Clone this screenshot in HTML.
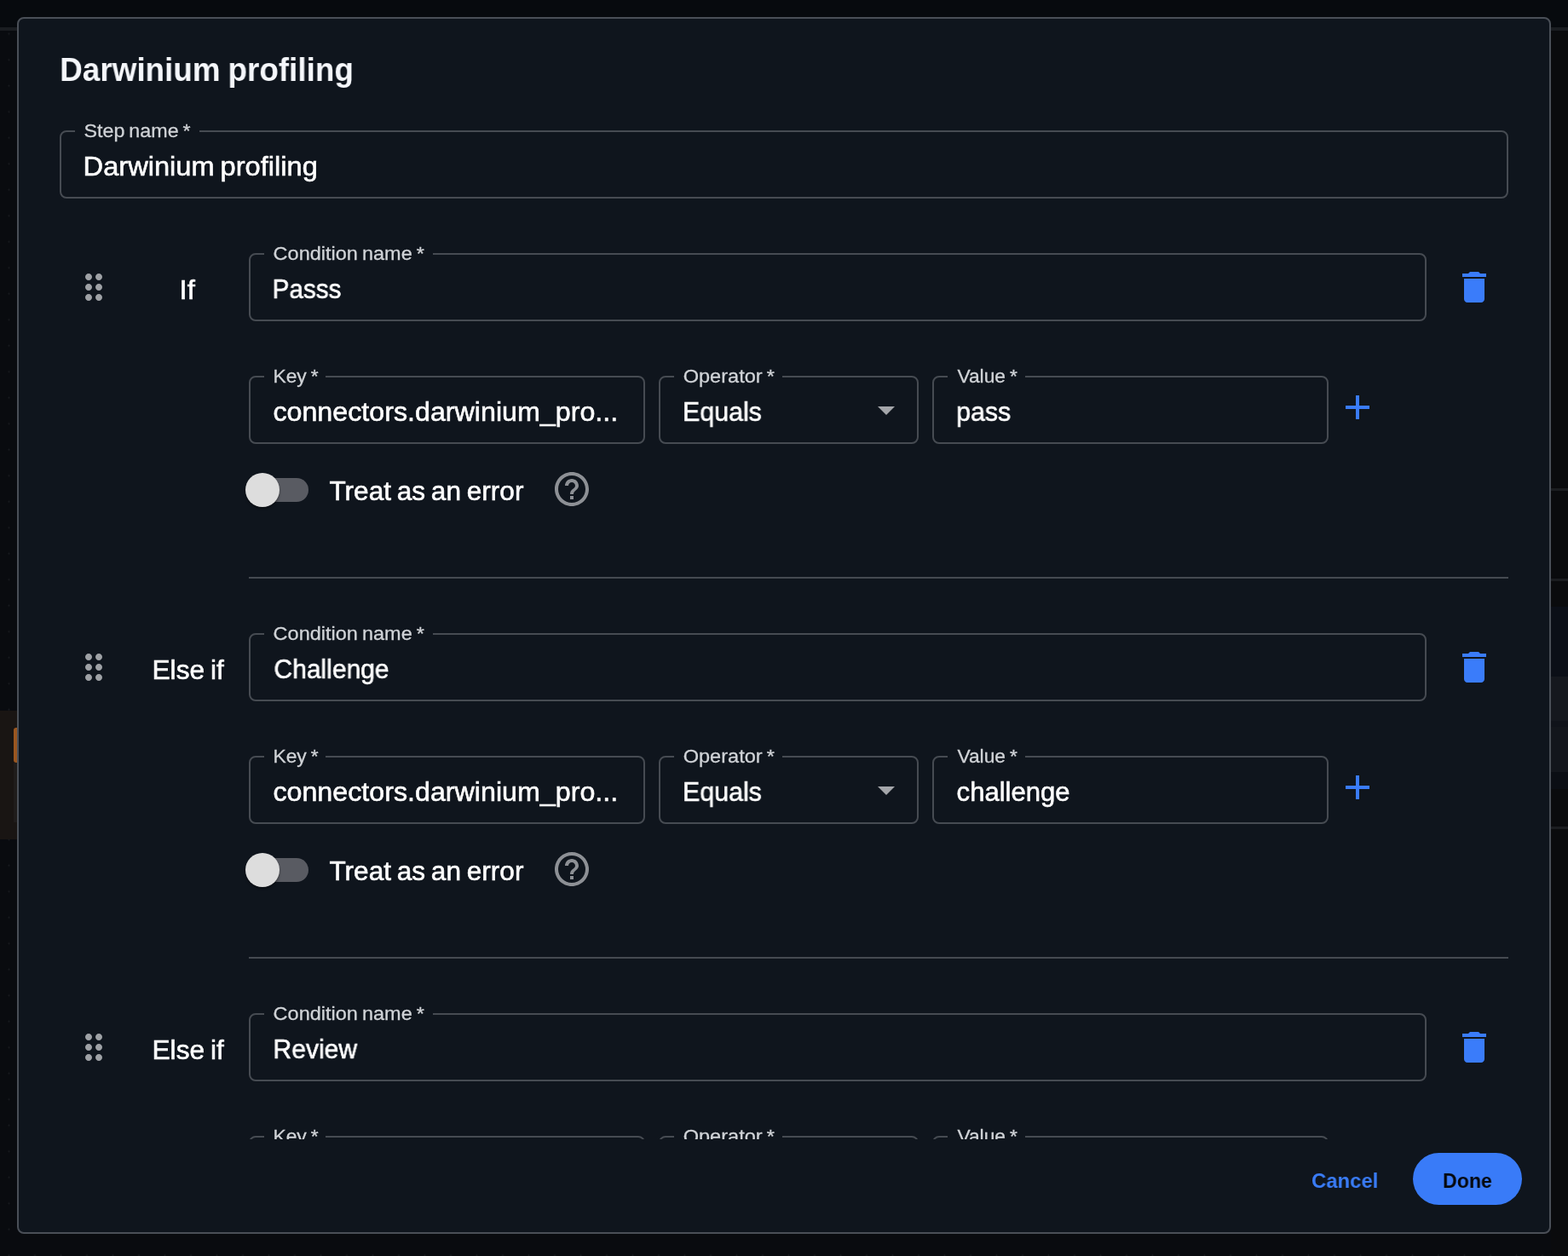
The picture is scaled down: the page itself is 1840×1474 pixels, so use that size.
<!DOCTYPE html>
<html lang="en">
<head>
<meta charset="utf-8">
<title>Darwinium profiling</title>
<style>
*{box-sizing:border-box;margin:0;padding:0}
html,body{width:1840px;height:1474px;overflow:hidden;background:#090b0f}
body{position:relative;font-family:"Liberation Sans",sans-serif;color:#fff;-webkit-font-smoothing:antialiased}
/* ---------- dimmed app behind the modal ---------- */
.app{position:absolute;left:0;top:0;width:1840px;height:1474px;background:#090b0f;overflow:hidden}
.app .dots{position:absolute;left:0;top:36px;width:1840px;height:1438px;
  background-image:radial-gradient(circle,#181b1f 0,#181b1f 0.7px,transparent 1.3px);
  background-size:30.5px 30.5px;background-position:-4.75px -11.55px}
.app .topbar{position:absolute;left:0;top:0;width:1840px;height:32px;background:#070a0e}
.app .topline{position:absolute;left:0;top:32px;width:1840px;height:4px;background:#1a1d21}
.app .side{position:absolute;left:1820px;top:36px;width:20px;height:1438px;background:#0a0b0d}
.app .side i{position:absolute;left:0;width:20px;display:block}
.app .node{position:absolute;left:0;top:834px;width:20px;height:151px;background:#191513}
.app .node b{position:absolute;left:16px;top:20px;width:4px;height:41px;background:#9a5620;border-radius:3px 0 0 3px}
.app .node u{position:absolute;left:16px;top:61px;width:4px;height:70px;background:#1f1c1b}
/* ---------- dialog ---------- */
.dialog{position:absolute;left:20px;top:20px;width:1800px;height:1428px;border:2px solid #4a4f57;border-radius:8px;background:#0f151d;overflow:hidden}
.page{position:absolute;left:-22px;top:-22px;width:1840px;height:1474px}
.scroll{position:absolute;left:0;top:0;width:1840px;height:1337px;overflow:hidden}
.t{display:inline-block;white-space:nowrap;transform-origin:0 50%;will-change:transform;word-spacing:-0.065em;-webkit-text-stroke:0.55px currentColor}
h2.title{position:absolute;left:70px;top:57.5px;font-size:38.5px;line-height:48px;font-weight:700;color:#f5f7fb;}
h2.title .t{-webkit-text-stroke:0;word-spacing:-1.5px}
.cond{position:absolute;left:0;width:1840px;height:446px}
.field{position:absolute;height:80px;border:2px solid #464b52;border-radius:8px}
.field label{position:absolute;left:16px;top:-14px;height:26px;padding:0 10px;background:#0f151d;font-size:22.6px;line-height:26px;color:#d0d3d7;white-space:nowrap}
.field label .t{-webkit-text-stroke:0.3px currentColor}
.field .val{position:absolute;left:26px;top:23px;font-size:31px;line-height:36px;color:#fff;white-space:nowrap}
.field svg.dd{position:absolute;right:12px;top:14px}
.kw{position:absolute;top:26px;left:221px;width:0;font-size:31px;line-height:36px;white-space:nowrap;display:flex;justify-content:center}
.kw .t{transform-origin:50% 50%}
.ico{position:absolute;width:48px;height:48px;display:block}
.sw-track{position:absolute;left:294px;top:264px;width:68px;height:28px;border-radius:14px;background:#595b62}
.sw-thumb{position:absolute;left:288px;top:258px;width:40px;height:40px;border-radius:50%;background:#dddddd;box-shadow:0 2px 3px rgba(0,0,0,.4)}
.sw-label{position:absolute;left:387px;top:261.5px;font-size:31px;line-height:36px;white-space:nowrap}
.hr{position:absolute;left:292px;top:380px;width:1478px;height:2px;background:#454a51}
.actions{position:absolute;left:0;top:1337px;width:1840px;height:111px}
.btn{position:absolute;top:16px;height:61px;width:128px;border:0;border-radius:31px;font-family:inherit;font-size:24.5px;font-weight:700;line-height:65px;text-align:center;background:transparent;color:#3a7cf6;padding:0}
.btn .t{transform-origin:50% 50%;-webkit-text-stroke:0}
.btn.primary{background:#397bf8;color:#06090e}
</style>
</head>
<body>
<div class="app" aria-hidden="true">
  <div class="topbar"></div>
  <div class="topline"></div>
  <div class="dots"></div>
  <div class="node"><b></b><u></u></div>
  <div class="side">
    <i style="top:537px;height:3px;background:#1b1d20"></i>
    <i style="top:643px;height:3px;background:#1b1d20"></i>
    <i style="top:676px;height:82px;background:#0b0f17"></i>
    <i style="top:758px;height:52px;background:#15181e"></i>
    <i style="top:810px;height:7px;background:#10131a"></i>
    <i style="top:817px;height:53px;background:#13161c"></i>
    <i style="top:870px;height:20px;background:#0b0e14"></i>
    <i style="top:934px;height:3px;background:#1b1d20"></i>
  </div>
</div>

<div class="dialog" role="dialog" aria-modal="true">
<div class="page">
  <div class="scroll">
    <h2 class="title"><span class="t" style="transform:translateX(0.20px) scaleX(0.9575)">Darwinium profiling</span></h2>
    <div class="field" style="left:70px;top:153px;width:1700px">
      <label style="width:146px"><span class="t" style="transform:translateX(0.40px) scaleX(1.0314)">Step name *</span></label>
      <div class="val"><span class="t" style="transform:translateX(-0.40px) scaleX(1.0523)">Darwinium profiling</span></div>
    </div>

    <section class="cond" style="top:297px">
      <svg class="ico" style="left:86px;top:16px" viewBox="0 0 24 24"><path fill="#9fa2a6" d="M11 18c0 1.1-.9 2-2 2s-2-.9-2-2 .9-2 2-2 2 .9 2 2zm-2-8c-1.1 0-2 .9-2 2s.9 2 2 2 2-.9 2-2-.9-2-2-2zm0-6c-1.1 0-2 .9-2 2s.9 2 2 2 2-.9 2-2-.9-2-2-2zm6 4c1.1 0 2-.9 2-2s-.9-2-2-2-2 .9-2 2 .9 2 2 2zm0 2c-1.1 0-2 .9-2 2s.9 2 2 2 2-.9 2-2-.9-2-2-2zm0 6c-1.1 0-2 .9-2 2s.9 2 2 2 2-.9 2-2-.9-2-2-2z"/></svg>
      <div class="kw"><span class="t" style="transform:translateX(-0.90px) scaleX(1.0632)">If</span></div>
      <div class="field" style="left:292px;top:0;width:1382px">
        <label style="width:198px"><span class="t" style="transform:translateX(0.60px) scaleX(1.0403)">Condition name *</span></label>
        <div class="val"><span class="t" style="transform:translateX(-0.40px) scaleX(0.9567)">Passs</span></div>
      </div>
      <svg class="ico" style="left:1706px;top:16px" viewBox="0 0 24 24"><path fill="#3a7cfa" d="M6 19c0 1.1.9 2 2 2h8c1.1 0 2-.9 2-2V7H6v12zM19 4h-3.5l-1-1h-5l-1 1H5v2h14V4z"/></svg>
      <div class="field" style="left:292px;top:144px;width:465px">
        <label style="width:72px"><span class="t" style="transform:translateX(0.40px) scaleX(1.0121)">Key *</span></label>
        <div class="val"><span class="t" style="transform:translateX(0.40px) scaleX(1.0396)">connectors.darwinium_pro...</span></div>
      </div>
      <div class="field" style="left:773px;top:144px;width:305px">
        <label style="width:127px"><span class="t" style="transform:translateX(0.70px) scaleX(1.0421)">Operator *</span></label>
        <div class="val"><span class="t" style="transform:translateX(0.00px) scaleX(0.9796)">Equals</span></div>
        <svg class="ico dd" viewBox="0 0 24 24"><path fill="#a4a6aa" d="M7 10l5 5 5-5z"/></svg>
      </div>
      <div class="field" style="left:1094px;top:144px;width:465px">
        <label style="width:91px"><span class="t" style="transform:translateX(1.40px) scaleX(1.0094)">Value *</span></label>
        <div class="val"><span class="t" style="transform:translateX(0.20px) scaleX(0.9764)">pass</span></div>
      </div>
      <svg class="ico" style="left:1569px;top:157px" viewBox="0 0 24 24"><path fill="#3a7cfa" d="M19 13h-6v6h-2v-6H5v-2h6V5h2v6h6v2z"/></svg>
      <div class="sw-track"></div>
      <div class="sw-thumb"></div>
      <div class="sw-label"><span class="t" style="transform:translateX(-0.60px) scaleX(1.0197)">Treat as an error</span></div>
      <svg class="ico" style="left:647px;top:253px" viewBox="0 0 24 24"><path fill="#8d9095" d="M11 18h2v-2h-2v2zm1-16C6.48 2 2 6.48 2 12s4.48 10 10 10 10-4.48 10-10S17.52 2 12 2zm0 18c-4.41 0-8-3.59-8-8s3.59-8 8-8 8 3.59 8 8-3.59 8-8 8zm0-14c-2.21 0-4 1.79-4 4h2c0-1.1.9-2 2-2s2 .9 2 2c0 2-3 1.75-3 5h2c0-2.25 3-2.5 3-5 0-2.21-1.79-4-4-4z"/></svg>
      <div class="hr"></div>
    </section>

    <section class="cond" style="top:743px">
      <svg class="ico" style="left:86px;top:16px" viewBox="0 0 24 24"><path fill="#9fa2a6" d="M11 18c0 1.1-.9 2-2 2s-2-.9-2-2 .9-2 2-2 2 .9 2 2zm-2-8c-1.1 0-2 .9-2 2s.9 2 2 2 2-.9 2-2-.9-2-2-2zm0-6c-1.1 0-2 .9-2 2s.9 2 2 2 2-.9 2-2-.9-2-2-2zm6 4c1.1 0 2-.9 2-2s-.9-2-2-2-2 .9-2 2 .9 2 2 2zm0 2c-1.1 0-2 .9-2 2s.9 2 2 2 2-.9 2-2-.9-2-2-2zm0 6c-1.1 0-2 .9-2 2s.9 2 2 2 2-.9 2-2-.9-2-2-2z"/></svg>
      <div class="kw"><span class="t" style="transform:translateX(-0.60px) scaleX(1.0228)">Else if</span></div>
      <div class="field" style="left:292px;top:0;width:1382px">
        <label style="width:198px"><span class="t" style="transform:translateX(0.60px) scaleX(1.0403)">Condition name *</span></label>
        <div class="val"><span class="t" style="transform:translateX(1.40px) scaleX(0.9686)">Challenge</span></div>
      </div>
      <svg class="ico" style="left:1706px;top:16px" viewBox="0 0 24 24"><path fill="#3a7cfa" d="M6 19c0 1.1.9 2 2 2h8c1.1 0 2-.9 2-2V7H6v12zM19 4h-3.5l-1-1h-5l-1 1H5v2h14V4z"/></svg>
      <div class="field" style="left:292px;top:144px;width:465px">
        <label style="width:72px"><span class="t" style="transform:translateX(0.40px) scaleX(1.0121)">Key *</span></label>
        <div class="val"><span class="t" style="transform:translateX(0.40px) scaleX(1.0396)">connectors.darwinium_pro...</span></div>
      </div>
      <div class="field" style="left:773px;top:144px;width:305px">
        <label style="width:127px"><span class="t" style="transform:translateX(0.70px) scaleX(1.0421)">Operator *</span></label>
        <div class="val"><span class="t" style="transform:translateX(0.00px) scaleX(0.9796)">Equals</span></div>
        <svg class="ico dd" viewBox="0 0 24 24"><path fill="#a4a6aa" d="M7 10l5 5 5-5z"/></svg>
      </div>
      <div class="field" style="left:1094px;top:144px;width:465px">
        <label style="width:91px"><span class="t" style="transform:translateX(1.40px) scaleX(1.0094)">Value *</span></label>
        <div class="val"><span class="t" style="transform:translateX(0.60px) scaleX(1.0021)">challenge</span></div>
      </div>
      <svg class="ico" style="left:1569px;top:157px" viewBox="0 0 24 24"><path fill="#3a7cfa" d="M19 13h-6v6h-2v-6H5v-2h6V5h2v6h6v2z"/></svg>
      <div class="sw-track"></div>
      <div class="sw-thumb"></div>
      <div class="sw-label"><span class="t" style="transform:translateX(-0.60px) scaleX(1.0197)">Treat as an error</span></div>
      <svg class="ico" style="left:647px;top:253px" viewBox="0 0 24 24"><path fill="#8d9095" d="M11 18h2v-2h-2v2zm1-16C6.48 2 2 6.48 2 12s4.48 10 10 10 10-4.48 10-10S17.52 2 12 2zm0 18c-4.41 0-8-3.59-8-8s3.59-8 8-8 8 3.59 8 8-3.59 8-8 8zm0-14c-2.21 0-4 1.79-4 4h2c0-1.1.9-2 2-2s2 .9 2 2c0 2-3 1.75-3 5h2c0-2.25 3-2.5 3-5 0-2.21-1.79-4-4-4z"/></svg>
      <div class="hr"></div>
    </section>

    <section class="cond" style="top:1189px">
      <svg class="ico" style="left:86px;top:16px" viewBox="0 0 24 24"><path fill="#9fa2a6" d="M11 18c0 1.1-.9 2-2 2s-2-.9-2-2 .9-2 2-2 2 .9 2 2zm-2-8c-1.1 0-2 .9-2 2s.9 2 2 2 2-.9 2-2-.9-2-2-2zm0-6c-1.1 0-2 .9-2 2s.9 2 2 2 2-.9 2-2-.9-2-2-2zm6 4c1.1 0 2-.9 2-2s-.9-2-2-2-2 .9-2 2 .9 2 2 2zm0 2c-1.1 0-2 .9-2 2s.9 2 2 2 2-.9 2-2-.9-2-2-2zm0 6c-1.1 0-2 .9-2 2s.9 2 2 2 2-.9 2-2-.9-2-2-2z"/></svg>
      <div class="kw"><span class="t" style="transform:translateX(-0.60px) scaleX(1.0228)">Else if</span></div>
      <div class="field" style="left:292px;top:0;width:1382px">
        <label style="width:198px"><span class="t" style="transform:translateX(0.60px) scaleX(1.0403)">Condition name *</span></label>
        <div class="val"><span class="t" style="transform:translateX(0.40px) scaleX(0.9706)">Review</span></div>
      </div>
      <svg class="ico" style="left:1706px;top:16px" viewBox="0 0 24 24"><path fill="#3a7cfa" d="M6 19c0 1.1.9 2 2 2h8c1.1 0 2-.9 2-2V7H6v12zM19 4h-3.5l-1-1h-5l-1 1H5v2h14V4z"/></svg>
      <div class="field" style="left:292px;top:144px;width:465px">
        <label style="width:72px"><span class="t" style="transform:translateX(0.40px) scaleX(1.0121)">Key *</span></label>
        <div class="val"><span class="t" style="transform:translateX(0.40px) scaleX(1.0396)">connectors.darwinium_pro...</span></div>
      </div>
      <div class="field" style="left:773px;top:144px;width:305px">
        <label style="width:127px"><span class="t" style="transform:translateX(0.70px) scaleX(1.0421)">Operator *</span></label>
        <div class="val"><span class="t" style="transform:translateX(0.00px) scaleX(0.9796)">Equals</span></div>
        <svg class="ico dd" viewBox="0 0 24 24"><path fill="#a4a6aa" d="M7 10l5 5 5-5z"/></svg>
      </div>
      <div class="field" style="left:1094px;top:144px;width:465px">
        <label style="width:91px"><span class="t" style="transform:translateX(1.40px) scaleX(1.0094)">Value *</span></label>
        <div class="val"><span class="t" style="transform:translateX(0.00px) scaleX(1.0000)">review</span></div>
      </div>
      <svg class="ico" style="left:1569px;top:157px" viewBox="0 0 24 24"><path fill="#3a7cfa" d="M19 13h-6v6h-2v-6H5v-2h6V5h2v6h6v2z"/></svg>
      <div class="sw-track"></div>
      <div class="sw-thumb"></div>
      <div class="sw-label"><span class="t" style="transform:translateX(-0.60px) scaleX(1.0197)">Treat as an error</span></div>
      <svg class="ico" style="left:647px;top:253px" viewBox="0 0 24 24"><path fill="#8d9095" d="M11 18h2v-2h-2v2zm1-16C6.48 2 2 6.48 2 12s4.48 10 10 10 10-4.48 10-10S17.52 2 12 2zm0 18c-4.41 0-8-3.59-8-8s3.59-8 8-8 8 3.59 8 8-3.59 8-8 8zm0-14c-2.21 0-4 1.79-4 4h2c0-1.1.9-2 2-2s2 .9 2 2c0 2-3 1.75-3 5h2c0-2.25 3-2.5 3-5 0-2.21-1.79-4-4-4z"/></svg>
      <div class="hr"></div>
    </section>
  </div>
  <div class="actions">
    <button class="btn" style="left:1514px"><span class="t" style="transform:translateX(0.00px) scaleX(0.9744)">Cancel</span></button>
    <button class="btn primary" style="left:1658px"><span class="t" style="transform:translateX(0.30px) scaleX(0.9450)">Done</span></button>
  </div>
</div>
</div>
</body>
</html>
